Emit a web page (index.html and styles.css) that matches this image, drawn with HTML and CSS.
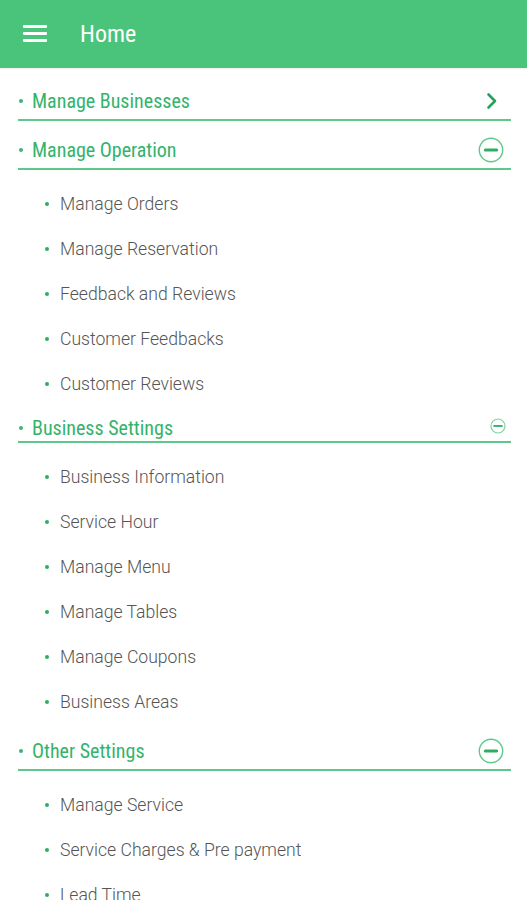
FILE: index.html
```html
<!DOCTYPE html>
<html lang="en">
<head>
<meta charset="utf-8">
<title>Home</title>
<link rel="stylesheet" href="styles.css">
</head>
<body>
<header class="appbar">
  <div class="menu-btn" aria-label="Menu"><span></span><span></span><span></span></div>
  <h1 class="title">Home</h1>
</header>
<main class="content">
  <section class="section section--collapsed">
    <div class="head">
      <span class="dot"></span><span class="head-text">Manage Businesses</span>
      <svg class="chev" width="12" height="18" viewBox="0 0 12 18"><path d="M2.5 2.5 L9 9 L2.5 15.5" fill="none" stroke="#25a35a" stroke-width="2.6" stroke-linecap="round" stroke-linejoin="round"/></svg>
    </div>
  </section>
  <section class="section">
    <div class="head">
      <span class="dot"></span><span class="head-text">Manage Operation</span>
      <svg class="minus" width="26" height="26" viewBox="0 0 26 26"><circle cx="13" cy="13" r="11.7" fill="none" stroke="#5cc98a" stroke-width="1.4"/><line x1="7.3" y1="13" x2="18.7" y2="13" stroke="#2fae63" stroke-width="3" stroke-linecap="round"/></svg>
    </div>
    <ul class="items">
      <li class="item"><span class="dot"></span>Manage Orders</li>
      <li class="item"><span class="dot"></span>Manage Reservation</li>
      <li class="item"><span class="dot"></span>Feedback and Reviews</li>
      <li class="item"><span class="dot"></span>Customer Feedbacks</li>
      <li class="item"><span class="dot"></span>Customer Reviews</li>
    </ul>
  </section>
  <section class="section">
    <div class="head head--compact">
      <span class="dot"></span><span class="head-text">Business Settings</span>
      <svg class="minus minus--small" width="16" height="16" viewBox="0 0 16 16"><circle cx="8" cy="8" r="7" fill="none" stroke="#7fd3a2" stroke-width="1.2"/><line x1="4.3" y1="8" x2="11.7" y2="8" stroke="#3fb56f" stroke-width="2.2" stroke-linecap="round"/></svg>
    </div>
    <ul class="items">
      <li class="item"><span class="dot"></span>Business Information</li>
      <li class="item"><span class="dot"></span>Service Hour</li>
      <li class="item"><span class="dot"></span>Manage Menu</li>
      <li class="item"><span class="dot"></span>Manage Tables</li>
      <li class="item"><span class="dot"></span>Manage Coupons</li>
      <li class="item"><span class="dot"></span>Business Areas</li>
    </ul>
  </section>
  <section class="section">
    <div class="head">
      <span class="dot"></span><span class="head-text">Other Settings</span>
      <svg class="minus" width="26" height="26" viewBox="0 0 26 26"><circle cx="13" cy="13" r="11.7" fill="none" stroke="#5cc98a" stroke-width="1.4"/><line x1="7.3" y1="13" x2="18.7" y2="13" stroke="#2fae63" stroke-width="3" stroke-linecap="round"/></svg>
    </div>
    <ul class="items">
      <li class="item"><span class="dot"></span>Manage Service</li>
      <li class="item"><span class="dot"></span>Service Charges &amp; Pre payment</li>
      <li class="item"><span class="dot"></span>Lead Time</li>
    </ul>
  </section>
</main>
</body>
</html>
```
FILE: styles.css
```css
* { box-sizing: border-box; }
html, body { margin: 0; padding: 0; background: #fff; }
body {
  font-family: Roboto, "Liberation Sans", sans-serif;
  font-stretch: 87.5%;
  overflow: hidden;
}
.appbar {
  height: 68px;
  background: #4ac47a;
  display: flex;
  align-items: center;
  padding-left: 23px;
  box-shadow: 0 1px 2px rgba(0,0,0,0.08);
}
.menu-btn {
  width: 24px;
  display: flex;
  flex-direction: column;
  gap: 4.5px;
  margin-top: -1px;
}
.menu-btn span {
  display: block;
  height: 2.6px;
  background: #fff;
  border-radius: 1px;
}
.title {
  margin: 0 0 0 33px;
  font-size: 24px;
  font-weight: 400;
  color: #fff;
}
.content {
  padding: 15px 16px 0 18px;
}
.head {
  height: 38px;
  display: flex;
  align-items: center;
  border-bottom: 2px solid #5cc98a;
  color: #34b36b;
  font-size: 20px;
}
.head--compact { height: 28px; }
.section--collapsed { margin-bottom: 11px; }
.head .dot {
  width: 4px; height: 4px;
  margin: 0 9px 0 1px;
  background: #3fb56f;
}
.dot {
  display: inline-block;
  border-radius: 50%;
  flex: none;
}
.head-text { flex: 1; }
.chev { margin-right: 13px; }
.minus { margin-right: 7px; }
.minus--small { margin-right: 5px; margin-top: -4px; }
.items {
  list-style: none;
  margin: 0;
  padding: 11px 0 9px 0;
}
.item {
  height: 45px;
  display: flex;
  align-items: center;
  padding-left: 27px;
  font-size: 17.6px;
  font-weight: 300;
  font-stretch: 100%;
  color: #555;
}
.item .dot {
  width: 4px; height: 4px;
  margin-right: 11px;
  background: #2eae63;
}
```
